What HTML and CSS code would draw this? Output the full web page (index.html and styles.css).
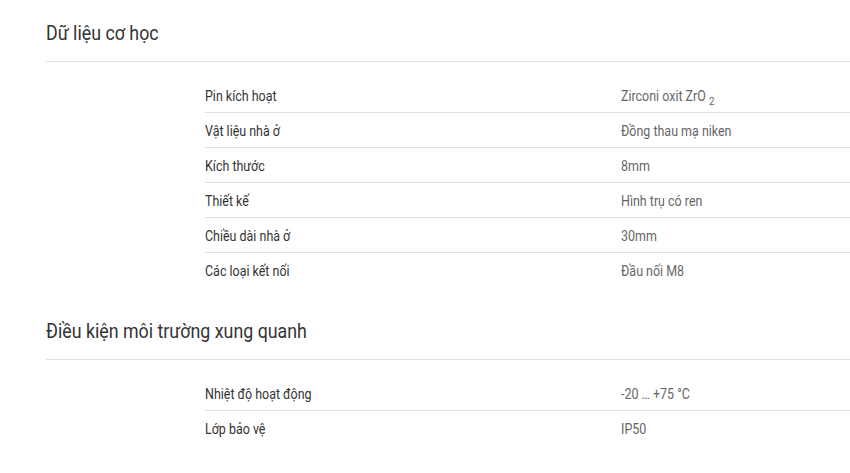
FILE: index.html
```html
<!DOCTYPE html>
<html lang="vi">
<head>
<meta charset="utf-8">
<link rel="stylesheet" href="styles.css">
</head>
<body>
<div class="page">
  <section class="section">
    <h2 class="section-title"><span class="cond">Dữ liệu cơ học</span></h2>
    <div class="table">
      <div class="row"><div class="label"><span class="cond">Pin kích hoạt</span></div><div class="value"><span class="cond">Zirconi oxit ZrO <sub>2</sub></span></div></div>
      <div class="row"><div class="label"><span class="cond">Vật liệu nhà ở</span></div><div class="value"><span class="cond">Đồng thau mạ niken</span></div></div>
      <div class="row"><div class="label"><span class="cond">Kích thước</span></div><div class="value"><span class="cond">8mm</span></div></div>
      <div class="row"><div class="label"><span class="cond">Thiết kế</span></div><div class="value"><span class="cond">Hình trụ có ren</span></div></div>
      <div class="row"><div class="label"><span class="cond">Chiều dài nhà ở</span></div><div class="value"><span class="cond">30mm</span></div></div>
      <div class="row"><div class="label"><span class="cond">Các loại kết nối</span></div><div class="value"><span class="cond">Đầu nối M8</span></div></div>
    </div>
  </section>
  <section class="section">
    <h2 class="section-title"><span class="cond">Điều kiện môi trường xung quanh</span></h2>
    <div class="table">
      <div class="row"><div class="label"><span class="cond">Nhiệt độ hoạt động</span></div><div class="value"><span class="cond">-20 … +75 °C</span></div></div>
      <div class="row"><div class="label"><span class="cond">Lớp bảo vệ</span></div><div class="value"><span class="cond">IP50</span></div></div>
    </div>
  </section>
</div>
</body>
</html>
```
FILE: styles.css
```css
html, body {
  margin: 0;
  padding: 0;
  background: #fff;
}
body {
  font-family: Roboto, "Noto Sans", sans-serif;
  color: #333;
}
.page {
  padding-left: 46px;
}
.section + .section {
  margin-top: 11px;
}
.cond {
  display: inline-block;
  transform: scaleX(0.89);
  transform-origin: left center;
  white-space: nowrap;
}
.section-title {
  margin: 0;
  padding: 19px 0 14px;
  font-size: 20px;
  line-height: 28px;
  font-weight: 400;
  color: #333;
  border-bottom: 1px solid #e0e0e0;
}
.table {
  margin-top: 16px;
  margin-left: 159px;
}
.row {
  display: grid;
  grid-template-columns: 416px 1fr;
  height: 32px;
  padding-top: 2px;
  align-items: center;
  font-size: 14px;
  border-bottom: 1px solid #e0e0e0;
}
.row:last-child {
  border-bottom: none;
}
.label {
  color: #333;
}
.value {
  color: #666;
}
.value sub {
  font-size: 11px;
  vertical-align: -4px;
  line-height: 0;
}
```
